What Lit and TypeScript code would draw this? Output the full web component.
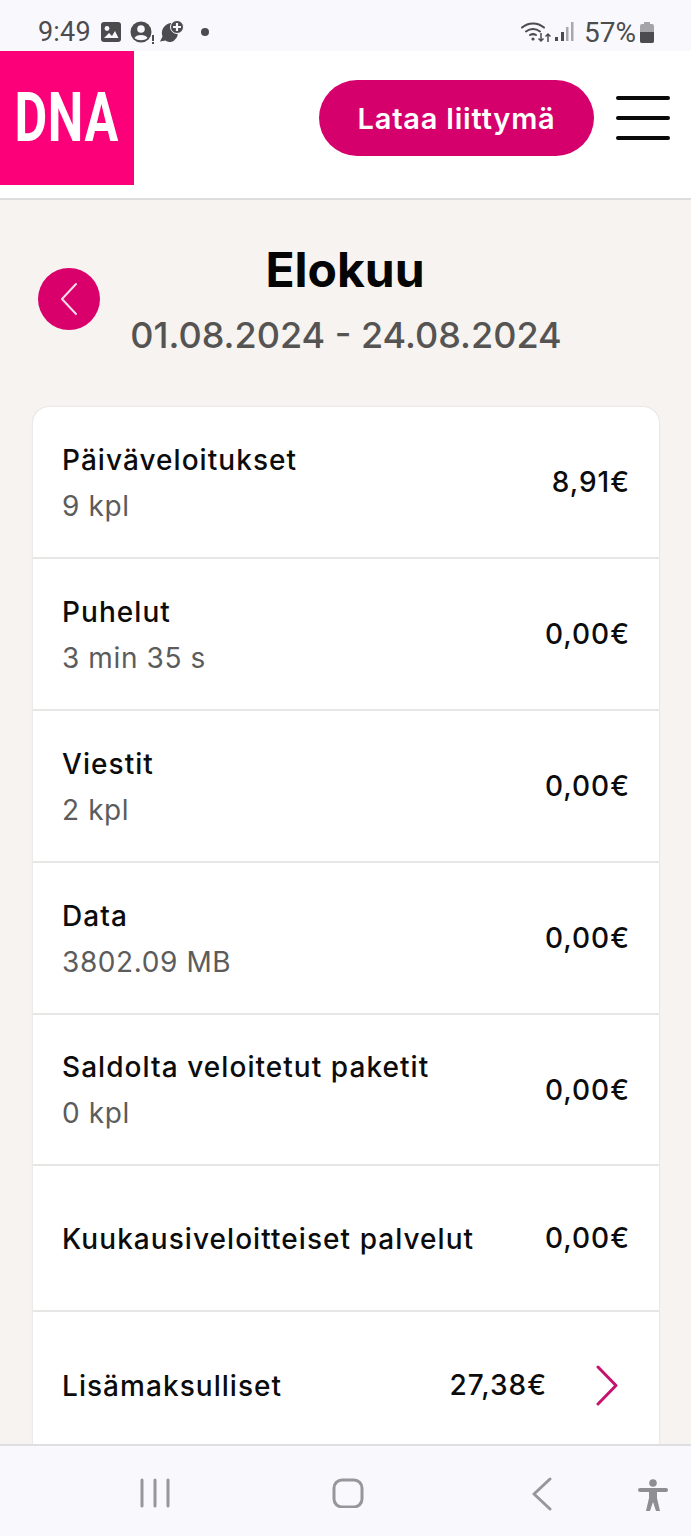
import { LitElement, html, css, svg } from "lit";
import { customElement } from "lit/decorators.js";

interface Row { title: string; sub?: string; amount: string; h: number; arrow?: boolean; }
const ROWS: Row[] = [
  { title: "Päiväveloitukset", sub: "9 kpl", amount: "8,91€", h: 152 },
  { title: "Puhelut", sub: "3 min 35 s", amount: "0,00€", h: 152 },
  { title: "Viestit", sub: "2 kpl", amount: "0,00€", h: 152 },
  { title: "Data", sub: "3802.09 MB", amount: "0,00€", h: 152 },
  { title: "Saldolta veloitetut paketit", sub: "0 kpl", amount: "0,00€", h: 151 },
  { title: "Kuukausiveloitteiset palvelut", amount: "0,00€", h: 146 },
  { title: "Lisämaksulliset", amount: "27,38€", h: 146, arrow: true },
];

@customElement("app-root")
export class AppRoot extends LitElement {
  static styles = css`
    :host { display: flex; flex-direction: column; height: 1536px; overflow: hidden; background: #f6f3f0;
      font-family: Inter, "Noto Sans", sans-serif; color: #0c0c0c; }
    .status { height: 51px; flex: none; background: #f9f9fd; display: flex; align-items: center;
      justify-content: space-between; padding: 13px 37px 0 38px; color: #4c4c4e; font-family: Roboto, sans-serif; font-size: 27px; box-sizing: border-box; }
    .status-group { display: flex; align-items: center; }
    .status svg { display: block; }
    .time { margin-right: 9px; letter-spacing: 0.2px; }
    .pct { margin: 0 4px 0 9px; font-size: 28px; }
    .header { flex: none; height: 147px; background: #fff; border-bottom: 2px solid #dcdcda; display: flex; align-items: flex-start; }
    .logo { width: 134px; height: 134px; background: #fb0079; color: #fff; display: flex; align-items: center; justify-content: center;
      font-family: Roboto, sans-serif; font-weight: 700; font-size: 68px; line-height: 1; flex: none; overflow: hidden; }
    .logo span { display: block; transform: scaleX(0.74); letter-spacing: 1px; }
    .cta { margin: 29px 0 0 auto; width: 275px; height: 76px; border-radius: 38px; background: #d6006d; color: #fff;
      display: flex; align-items: center; justify-content: center; font-size: 29px; font-weight: 600; letter-spacing: 0.8px; border: 0; font-family: inherit; padding: 0; }
    .burger { margin: 45px 21px 0 22px; width: 54px; display: flex; flex-direction: column; gap: 16px; }
    .burger i { display: block; height: 4px; border-radius: 2px; background: #0a0a0a; }
    .main { flex: 1; min-height: 0; overflow: hidden; padding: 0 32px 0 33px; box-sizing: border-box; }
    .head { position: relative; text-align: center; height: 207px; }
    .back { position: absolute; left: 5px; top: 68px; width: 62px; height: 62px; border-radius: 50%; background: #d9006c;
      display: flex; align-items: center; justify-content: center; }
    h1 { margin: 0; padding-top: 42px; font-size: 48px; line-height: 56px; font-weight: 700; color: #050505; transform: translateX(-1px); }
    .range { font-size: 36px; line-height: 44px; margin-top: 15px; font-weight: 500; color: #555452; white-space: nowrap; }
    .card { background: #fff; border-radius: 16px 16px 0 0; box-shadow: 0 0 2px rgba(0,0,0,.16); }
    .row { display: flex; align-items: center; padding: 0 29px; box-sizing: border-box; border-bottom: 2px solid #e6e6e4; }
    .row:last-child { border-bottom: 0; padding-right: 40px; }
    .info { flex: 1; min-width: 0; padding-top: 1px; }
    .title { font-size: 28px; line-height: 36px; font-weight: 500; letter-spacing: 1.05px; white-space: nowrap; }
    .sub { font-size: 28px; line-height: 36px; margin-top: 10px; color: #5c5c5c; letter-spacing: 0.6px; white-space: nowrap; }
    .amount { font-size: 28px; font-weight: 500; letter-spacing: 1px; white-space: nowrap; }
    .chev { margin-left: 50px; flex: none; display: block; transform: translateX(-1px); }
    .nav { flex: none; height: 92px; box-sizing: border-box; background: #f9f9fd; border-top: 2px solid #dfdfe3; position: relative; display: flex; align-items: center; }
    .nav svg { position: absolute; display: block; }
    .n1 { left: 139px; top: 32px; } .n2 { left: 332px; top: 32px; } .n3 { left: 531px; top: 31px; } .n4 { left: 638px; top: 33px; }
  `;

  private icons() {
    return html`
      <svg width="22" height="22" viewBox="0 0 22 22" style="margin-right:8px"><rect x="1" y="1" width="20" height="20" rx="3" fill="#4c4c4e"/><circle cx="7" cy="7.500" r="2.400" fill="#f9f9fd"/><path d="M4 17l5-5 3 3 3-5 3.500 7z" fill="#f9f9fd"/></svg>
      <svg width="26" height="24" viewBox="0 0 26 24" style="margin-right:3px"><circle cx="11" cy="12" r="10.500" fill="#4c4c4e"/><circle cx="11" cy="9" r="3.800" fill="#f9f9fd"/><path d="M4.500 18c1.500-4 11.500-4 13 0-3 3-10 3-13 0z" fill="#f9f9fd"/><rect x="22" y="15" width="2" height="6" fill="#4c4c4e"/><rect x="22" y="22" width="2" height="2" fill="#4c4c4e"/></svg>
      <svg width="26" height="24" viewBox="0 0 26 24"><path d="M12 3a10 10 0 0 1 0 19c-2 0-4-.5-5.500-1.500L1 21.500l2.500-5A10 10 0 0 1 12 3z" fill="#4c4c4e"/><circle cx="18" cy="7" r="6.500" fill="#4c4c4e" stroke="#f9f9fd" stroke-width="1"/><path d="M18 3v8M14 7h8" stroke="#f9f9fd" stroke-width="2.200"/></svg>
      <svg width="10" height="10" viewBox="0 0 10 10" style="margin-left:15px"><circle cx="5" cy="5" r="4" fill="#4c4c4e"/></svg>`;
  }

  private right() {
    return html`
      <svg width="30" height="24" viewBox="0 0 30 24"><g fill="none" stroke="#4c4c4e" stroke-width="2" stroke-linecap="round"><path d="M1 7.500a17 17 0 0 1 22 0"/><path d="M5 11.500a11.500 11.500 0 0 1 14 0"/><path d="M9 15a6 6 0 0 1 6 0"/></g><circle cx="12" cy="19" r="1.600" fill="#4c4c4e"/><path d="M20 13v8m-2.500-2.500l2.500 2.500 2.500-2.500M27 22v-8m-2.500 2.500L27 14l2.500 2.500" fill="none" stroke="#4c4c4e" stroke-width="1.500"/></svg>
      <svg width="20" height="20" viewBox="0 0 20 20" style="margin-left:4px"><rect x="0" y="15" width="3" height="4" fill="#4c4c4e"/><rect x="6" y="10" width="3" height="9" fill="#4c4c4e"/><rect x="11" y="5" width="2.500" height="14" fill="#a9a9ac"/><rect x="16" y="0" width="2.500" height="19" fill="#a9a9ac"/></svg>
      <span class="pct">57%</span>
      <svg width="14" height="21" viewBox="0 0 14 21"><path d="M4 0h6v2h2a2 2 0 0 1 2 2v15a2 2 0 0 1-2 2H2a2 2 0 0 1-2-2V4a2 2 0 0 1 2-2h2z" fill="#a5a5a8"/><path d="M0 10h14v9a2 2 0 0 1-2 2H2a2 2 0 0 1-2-2z" fill="#4c4c4e"/></svg>`;
  }

  render() {
    const chevPath = svg`<path d="M2 2l18 18.500L2 39" fill="none" stroke="#c3136f" stroke-width="3" stroke-linecap="round" stroke-linejoin="round"/>`;
    return html`
      <div class="status">
        <div class="status-group"><span class="time">9:49</span>${this.icons()}</div>
        <div class="status-group">${this.right()}</div>
      </div>
      <header class="header">
        <div class="logo"><span>DNA</span></div>
        <button class="cta">Lataa liittymä</button>
        <div class="burger"><i></i><i></i><i></i></div>
      </header>
      <main class="main">
        <div class="head">
          <div class="back"><svg width="20" height="34" viewBox="0 0 20 34"><path d="M17 2L3 17l14 15" fill="none" stroke="#f7dce9" stroke-width="2" stroke-linecap="round" stroke-linejoin="round"/></svg></div>
          <h1>Elokuu</h1>
          <div class="range">01.08.2024 - 24.08.2024</div>
        </div>
        <div class="card">
          ${ROWS.map(r => html`
            <div class="row" style="height:${r.h}px">
              <div class="info">
                <div class="title">${r.title}</div>
                ${r.sub ? html`<div class="sub">${r.sub}</div>` : ""}
              </div>
              <div class="amount">${r.amount}</div>
              ${r.arrow ? html`<svg class="chev" width="22" height="41" viewBox="0 0 22 41">${chevPath}</svg>` : ""}
            </div>`)}
        </div>
      </main>
      <nav class="nav">
        <svg class="n1" width="32" height="30" viewBox="0 0 32 30"><path d="M3 2v26M16 2v26M29 2v26" stroke="#97979b" stroke-width="3" stroke-linecap="round"/></svg>
        <svg class="n2" width="32" height="30" viewBox="0 0 32 30"><rect x="2" y="2" width="28" height="27" rx="8" fill="none" stroke="#97979b" stroke-width="3"/></svg>
        <svg class="n3" width="22" height="34" viewBox="0 0 22 34"><path d="M19 2L3 17l16 15" fill="none" stroke="#97979b" stroke-width="3" stroke-linecap="round" stroke-linejoin="round"/></svg>
        <svg class="n4" width="30" height="34" viewBox="0 0 30 34"><circle cx="15" cy="4" r="3.800" fill="#8f8f93"/><path d="M2 11h26" stroke="#8f8f93" stroke-width="4" stroke-linecap="round"/><path d="M11 11h8v8l3 13h-4l-3-9-3 9H8l3-13z" fill="#8f8f93"/></svg>
      </nav>
    `;
  }
}
